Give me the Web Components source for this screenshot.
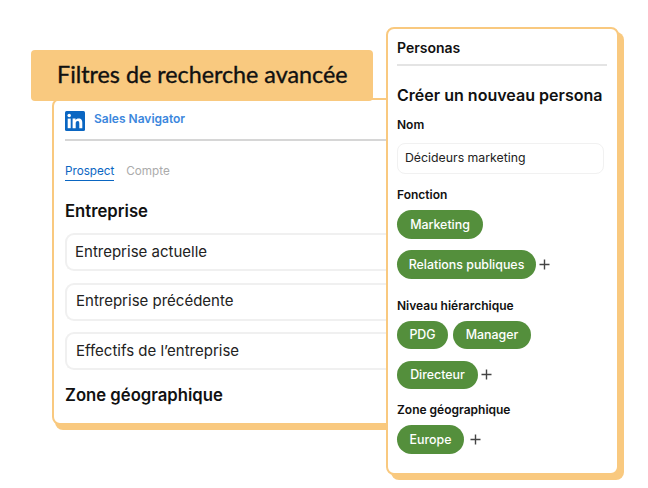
<!doctype html>
<html lang="fr"><head><meta charset="utf-8"><title>Filtres</title>
<style>
html,body{margin:0;padding:0;background:#fff}
body{width:648px;height:488px;overflow:hidden;font-family:Inter,"Liberation Sans",sans-serif;color:#111}
</style></head><body>
<x-stage>
  <x-filters>
    <x-field slot="fields">Entreprise actuelle</x-field>
    <x-field slot="fields" style="--tx:9px">Entreprise précédente</x-field>
    <x-field slot="fields" style="--tx:9px">Effectifs de l’entreprise</x-field>
  </x-filters>
  <x-banner>Filtres de recherche avancée</x-banner>
  <x-persona>
    <x-group label="Fonction" style="--top:13px">
      <x-chip style="width:86px">Marketing</x-chip><x-chip plus style="width:139px">Relations publiques</x-chip>
    </x-group>
    <x-group label="Niveau hiérarchique" style="--top:19px">
      <x-row><x-chip style="width:51px">PDG</x-chip><x-chip style="width:78px">Manager</x-chip></x-row><x-chip plus style="width:81px">Directeur</x-chip>
    </x-group>
    <x-group label="Zone géographique" style="--top:13px">
      <x-chip plus="wide" style="width:67px">Europe</x-chip>
    </x-group>
  </x-persona>
</x-stage>
<script>
function def(name,css,html,extra){
  customElements.define(name,class extends HTMLElement{
    constructor(){super();this.attachShadow({mode:'open'}).innerHTML='<style>'+css+'</style>'+html;}
    connectedCallback(){extra&&extra(this)}
  });
}
def('x-stage',':host{display:block;position:relative;width:648px;height:488px}','<slot></slot>');
def('x-banner',`:host{position:absolute;left:31px;top:50px;width:342px;height:51px;box-sizing:border-box;padding:0 0 2px 26px;display:flex;align-items:center;background:#f9c97f;border-radius:4px;font:400 23.3px/1 Lato,sans-serif;-webkit-text-stroke:.35px #111;color:#111}`,'<slot></slot>');
def('x-field',`:host{display:flex;align-items:center;box-sizing:border-box;height:38px;padding:0 0 2px var(--tx,8px);border:2px solid #f0f0f0;border-right:0;border-radius:9px;font:400 15px/1 Inter,sans-serif;color:#222}`,'<slot></slot>');
def('x-filters',`:host{position:absolute;left:52px;top:98px;width:350px;height:327px;box-sizing:border-box;background:#fff;border:2px solid #f9c97f;border-radius:8px;box-shadow:3px 5px 0 #f9c97f;padding:0 0 0 11px;font-family:Inter,sans-serif}
.head{display:flex;align-items:center;gap:10px;padding-top:11px;height:41px;box-sizing:border-box;border-bottom:2px solid #d6d6d6}
.head svg{display:block;margin-top:-9px}
.head span{font:600 12px/1 Inter,sans-serif;color:#3c87dd;margin-top:-12px;margin-left:-1px}
.tabs{display:flex;gap:12px;margin-top:23px;font:400 11.7px/15px Inter,sans-serif}
.tabs b{font-weight:400;color:#0a66c2;padding-bottom:1px;border-bottom:1px solid #0a66c2;height:15px}
.tabs i{font-style:normal;color:#ababab}
h2{margin:0;font:600 16.7px/20px Inter,sans-serif;color:#111}
h2.a{margin-top:20px}
.fields{display:flex;flex-direction:column;gap:11.5px;margin-top:12px}
h2.b{margin-top:15px}`,
`<div class="head"><svg width="20" height="20" viewBox="0 0 20 20"><rect width="20" height="20" rx="1.5" fill="#0a66c2"/><rect x="2.7" y="7.6" width="3" height="9.6" fill="#fff"/><circle cx="4.2" cy="4.6" r="1.75" fill="#fff"/><path d="M7.6 7.6h2.9v1.4c.5-.9 1.6-1.6 3.1-1.6 3 0 3.7 1.9 3.7 4.5v5.3h-3v-4.7c0-1.2-.1-2.6-1.6-2.6s-2 1.2-2 2.5v4.8H7.6z" fill="#fff"/></svg><span>Sales Navigator</span></div>
<div class="tabs"><b>Prospect</b><i>Compte</i></div>
<h2 class="a">Entreprise</h2><div class="fields"><slot name="fields"></slot></div><h2 class="b">Zone géographique</h2>`);
def('x-persona',`:host{position:absolute;left:386px;top:27px;width:233px;height:448px;box-sizing:border-box;background:#fff;border:2px solid #f9c97f;border-radius:8px;box-shadow:5px 5px 0 #f9c97f;padding:0 13px 0 9px;font-family:Inter,sans-serif}
.t{font:600 14px/17px Inter,sans-serif;padding:10px 0 8px;border-bottom:2px solid #e4e4e4;margin-right:-3px;color:#111}
h1{margin:19px 0 0;font:600 16.05px/21px Inter,sans-serif;color:#111;white-space:nowrap}
.l{font:600 12px/15px Inter,sans-serif;margin-top:11px;color:#111}
.i{box-sizing:border-box;height:31px;margin-top:11px;border:1.5px solid #f1f1f1;border-radius:8px;padding-left:7px;display:flex;align-items:center;font:400 12.3px/1 Inter,sans-serif;color:#222}`,
`<div class="t">Personas</div><h1>Créer un nouveau persona</h1><div class="l">Nom</div><div class="i">Décideurs marketing</div><slot></slot>`);
def('x-group',`:host{display:block;margin-top:var(--top,12px)}
.l{font:600 12px/15px Inter,sans-serif;color:#111}
.c{display:flex;flex-direction:column;align-items:flex-start;gap:11.5px;margin-top:8px}`,
`<div class="l"></div><div class="c"><slot></slot></div>`,el=>{el.shadowRoot.querySelector('.l').textContent=el.getAttribute('label')});
def('x-row',':host{display:flex;gap:5px}','<slot></slot>');
def('x-chip',`:host{display:inline-flex;position:relative;align-items:center;justify-content:center;box-sizing:border-box;height:28.5px;padding:1px 0 0;border-radius:15px;background:#548f3c;color:#fff;font:500 12.4px/1 Inter,sans-serif;white-space:nowrap}
.p{display:none;position:absolute;left:100%;top:8.5px;margin-left:3px;width:11px;height:11px}
:host([plus]) .p{display:block}
:host([plus="wide"]) .p{margin-left:6px}`,
`<slot></slot><svg class="p" viewBox="0 0 11 11"><path d="M5.5 .5v10M.5 5.5h10" stroke="#444" stroke-width="1.4" fill="none"/></svg>`);
</script></body></html>
